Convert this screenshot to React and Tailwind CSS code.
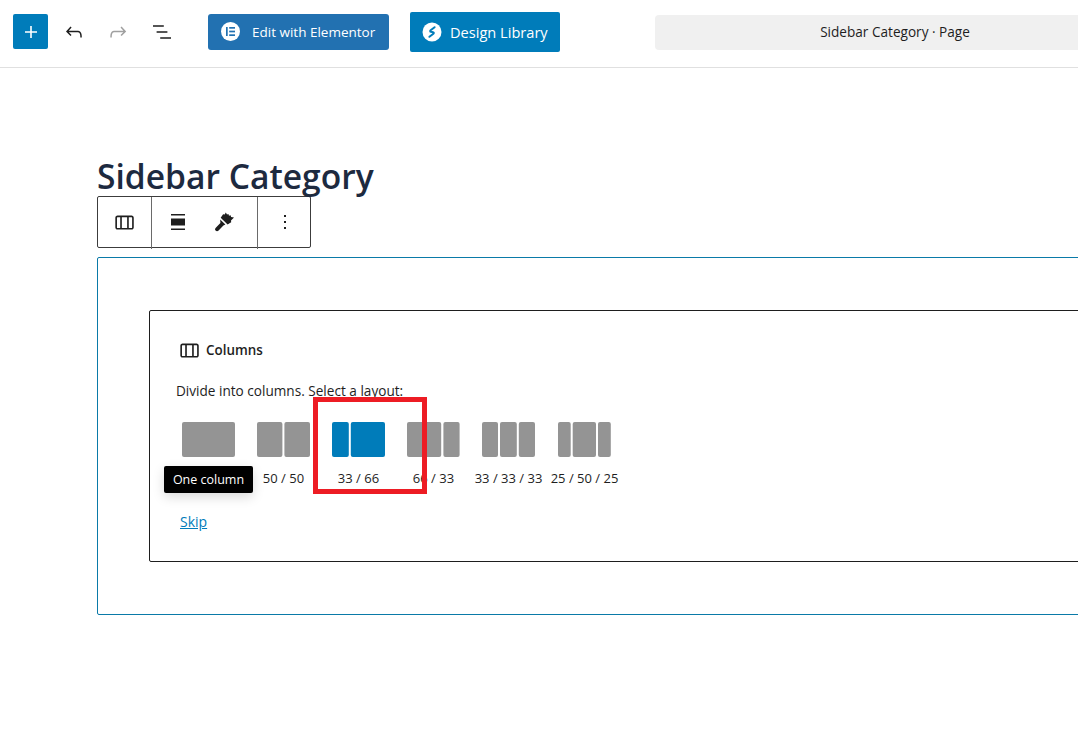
import React from "react";

const font = "font-['Open_Sans','Noto_Sans',sans-serif]";

function Wp({ d, size = 24, className = "" }) {
  return (
    <svg width={size} height={size} viewBox="0 0 24 24" fill="currentColor" className={`shrink-0 ${className}`}>
      <path d={d} />
    </svg>
  );
}

const COLUMNS =
  "M19 6H6c-1.1 0-2 .9-2 2v9c0 1.1.9 2 2 2h13c1.1 0 2-.9 2-2V8c0-1.1-.9-2-2-2zm-4.1 1.5v10H10v-10h4.9zM5.5 17V8c0-.3.2-.5.5-.5h2.5v10H6c-.3 0-.5-.2-.5-.5zm14 0c0 .3-.2.5-.5.5h-2.6v-10H19c.3 0 .5.2.5.5v9z";

function Bars({ bars, color }) {
  return (
    <svg width="53" height="35" viewBox="0 0 53 35" className="block">
      {bars.map(([x, w]) => (
        <rect key={x} x={x} y="0" width={w} height="35" rx="2" fill={color} />
      ))}
    </svg>
  );
}

const layouts = [
  { label: "", bars: [[0, 53]], cls: "" },
  { label: "50 / 50", bars: [[0, 25.4], [27.4, 25.6]], cls: "" },
  { label: "33 / 66", bars: [[0, 16.8], [18.8, 34.2]], active: true, cls: "" },
  { label: "66 / 33", bars: [[0, 34.2], [36.4, 16.2]], cls: "" },
  { label: "33 / 33 / 33", bars: [[0, 16], [18, 16.8], [36.8, 16.2]], cls: "" },
  { label: "25 / 50 / 25", bars: [[0, 12.7], [14.7, 23.3], [40, 12.8]], cls: "ml-[1px]" },
];

export default function App() {
  return (
    <div className={`${font} relative h-[732px] w-[1078px] overflow-hidden bg-white text-[#1e1e1e]`}>
      <header className="flex h-[68px] items-start border-b border-[#e0e0e0]">
        <div className="ml-[13px] mt-[14px] flex h-[35px] w-[35px] shrink-0 items-center justify-center rounded-[2px] bg-[#007cba] text-white">
          <Wp d="M18 11.2h-5.2V6h-1.6v5.2H6v1.6h5.2V18h1.6v-5.2H18z" />
        </div>
        <div className="ml-[14px] mt-[20px] flex h-[24px] shrink-0 items-center text-[#1e1e1e]">
          <Wp d="M18.3 11.7c-.6-.6-1.4-.9-2.3-.9H6.7l2.9-3.3-1.1-1-4.5 5L8.5 16l1-1-2.7-2.7H16c.5 0 .9.2 1.3.5 1 1 1 3.4 1 4.5v.3h1.5v-.2c0-1.5 0-4.3-1.5-5.7z" />
          <Wp d="M15.6 6.5l-1.1 1 2.9 3.3H8c-.9 0-1.7.3-2.3.9-1.4 1.5-1.4 4.2-1.4 5.6v.2h1.5v-.3c0-1.1 0-3.5 1-4.5.3-.3.7-.5 1.3-.5h9.2L14.5 15l1.1 1.1 4.6-4.6-4.6-5z" className="ml-[20px] text-[#a0a0a0]" />
          <Wp d="M13.8 5.2H3v1.5h10.8V5.2zm-3.6 12v1.5H21v-1.5H10.2zm7.2-6H6.6v1.5h10.8v-1.5z" className="ml-[20px]" />
        </div>
        <div className="ml-[34px] mt-[14px] flex h-[36px] w-[181px] shrink-0 items-center rounded-[3px] bg-[#2271b1] pb-[1px] pl-[13px] text-white">
          <span className="flex h-[19px] w-[19px] shrink-0 items-center justify-center rounded-full bg-white">
            <svg width="9" height="9" viewBox="0 0 9 9" fill="#2271b1">
              <rect x="0" y="0" width="1.7" height="9" />
              <rect x="3.2" y="0" width="5.8" height="1.7" />
              <rect x="3.2" y="3.65" width="5.8" height="1.7" />
              <rect x="3.2" y="7.3" width="5.8" height="1.7" />
            </svg>
          </span>
          <span className="ml-[12px] mt-[2px] whitespace-nowrap text-[13.5px]">Edit with Elementor</span>
        </div>
        <div className="ml-[21px] mt-[12px] flex h-[40px] w-[150px] shrink-0 items-center rounded-[2px] bg-[#007cba] pl-[12px] text-white">
          <svg width="20" height="20" viewBox="0 0 20 20" className="shrink-0">
            <circle cx="10" cy="10" r="9.5" fill="#fff" />
            <path d="M12.6 5.2 8.6 8.2c-.7.6-.5 1.4.4 1.6l2 .4c.9.2 1.1 1 .4 1.6l-4 3" fill="none" stroke="#007cba" strokeWidth="2" strokeLinecap="round" strokeLinejoin="round" />
          </svg>
          <span className="ml-[8px] mt-[2px] whitespace-nowrap text-[14.6px]">Design Library</span>
        </div>
        <div className="ml-[95px] mt-[15px] flex h-[35px] w-[480px] shrink-0 items-center justify-center rounded-[4px] bg-[#f0f0f0] text-[13.6px]">
          Sidebar Category · Page
        </div>
      </header>

      <main className="pl-[97px]">
        <h1 className="mt-[85px] h-[43px] whitespace-nowrap text-[33.6px] font-semibold leading-[46px] text-[#1d2a3f]">
          Sidebar Category
        </h1>
        <div className="flex h-[52px] w-[214px] rounded-[2px] border border-[#3c3c3c] text-[#1e1e1e]">
          <div className="-mb-[2px] flex w-[54px] items-center justify-center border-r border-[#6a6a6a] pb-[2px] pr-[2px]">
            <Wp d={COLUMNS} size={26} />
          </div>
          <div className="-mb-[2px] flex w-[106px] items-center gap-[22px] border-r border-[#6a6a6a] pb-[2px] pl-[14px]">
            <Wp d="M5 4h14v1.5H5zM5 8.5h14v7H5zM5 18.5h14V20H5z" />
            <svg width="24" height="24" viewBox="0 0 24 24" fill="currentColor" className="shrink-0">
              <path d="M13.8 2.4 15 4.6l1.4-.6.6 1.8 1.6-.5.5 1.6 2.9.5-3 3.2.2 1.6-3.6 2.3-6.9-6.7 2.4-3.5 1.6.2z" />
              <path d="M8.2 9.4 13.4 14.6 11.4 15.6 6.6 20.5c-.9.9-2.2.9-3 .1-.8-.8-.7-2 .2-2.9l4.6-4.8z" />
            </svg>
          </div>
          <div className="flex flex-1 items-center justify-center pl-[2px]">
            <Wp d="M13 19h-2v-2h2v2zm0-6h-2v-2h2v2zm0-6h-2V5h2v2z" />
          </div>
        </div>

        <section className="mt-[9px] h-[358px] w-[1100px] rounded-[2px] border border-[#0a7aa8] pl-[51px] pt-[52px]">
          <div className="h-[252px] w-[1000px] rounded-[2px] border border-[#1e1e1e] pl-[26px] pt-[27px]">
            <div className="flex h-[24px] items-center text-[13.4px] font-semibold">
              <Wp d={COLUMNS} size={26} />
              <span className="ml-[4px]">Columns</span>
            </div>
            <p className="mt-[19px] h-[20px] text-[13.6px] leading-[20px]">Divide into columns. Select a layout:</p>
            <div className="-ml-[5px] mt-[21px] flex">
              {layouts.map((l) => (
                <div key={l.label} className={`flex w-[75px] shrink-0 flex-col items-center ${l.cls}`}>
                  <Bars bars={l.bars} color={l.active ? "#007cba" : "#949494"} />
                  <span className="mt-[11px] h-[20px] whitespace-nowrap text-[13px] leading-[20px]">{l.label}</span>
                </div>
              ))}
            </div>
            <a className="ml-[4px] mt-[24px] block w-fit text-[14px] leading-[20px] text-[#007cba] underline">Skip</a>
          </div>
        </section>
      </main>

      <div className="absolute left-[164px] top-[466px] flex h-[27px] w-[89px] items-center justify-center rounded-[2px] bg-black pt-[1px] text-[12.5px] text-white shadow-[0_4px_12px_rgba(0,0,0,0.15)]">
        One column
      </div>
      <div className="absolute left-[313px] top-[397px] h-[97px] w-[114px] border-[5px] border-[#ed1c24]" />
    </div>
  );
}
